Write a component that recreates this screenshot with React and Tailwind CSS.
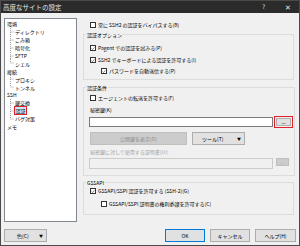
import React from 'react';

const Check = ({ checked }) => (
  <span className="w-[6px] h-[6px] border border-[#333333] bg-white flex items-center justify-center shrink-0">
    {checked && (
      <svg width="5" height="5" viewBox="0 0 5 5">
        <path d="M0.7 2.5 L1.9 3.7 L4.3 1.1" stroke="#222" strokeWidth="0.7" fill="none" />
      </svg>
    )}
  </span>
);

const Row = ({ checked, children, className = '' }) => (
  <div className={`flex items-center gap-[2px] h-[8px] ${className}`}>
    <Check checked={checked} />
    <span className="whitespace-nowrap">{children}</span>
  </div>
);

// tree connector
const Branch = ({ last }) => (
  <svg width="8" height="8" viewBox="0 0 8 8" className="shrink-0">
    <path d={last ? 'M3.5 0 V4 H7.5' : 'M3.5 0 V8 M3.5 4 H7.5'} stroke="#a0a0a0" strokeWidth="1" strokeDasharray="1 1" fill="none" />
  </svg>
);

const tree = [
  { label: '環境' },
  { label: 'ディレクトリ', child: true },
  { label: 'ごみ箱', child: true },
  { label: '暗号化', child: true },
  { label: 'SFTP', child: true },
  { label: 'シェル', child: true, last: true },
  { label: '接続' },
  { label: 'プロキシ', child: true },
  { label: 'トンネル', child: true, last: true },
  { label: 'SSH' },
  { label: '鍵交換', child: true },
  { label: '認証', child: true, selected: true },
  { label: 'バグ対策', child: true, last: true },
  { label: 'メモ' },
];

export default function App() {
  return (
    <div className="w-[300px] h-[246px] bg-[#f0f0f0] border border-[#4a4a4a] flex flex-col text-[5px] leading-[8px] text-black font-['Noto_Sans_CJK_JP','Noto_Sans',sans-serif] overflow-hidden">
      {/* title bar */}
      <div className="h-[12px] bg-[#2b2b2b] flex items-center text-[#e6e6e6] shrink-0">
        <span className="ml-[2px] text-[6.5px] leading-[12px]">高度なサイトの設定</span>
        <span className="ml-auto text-[6px]">?</span>
        <span className="ml-[20px] mr-[8px] text-[7px]">✕</span>
      </div>

      <div className="flex items-start pt-[4px]">
        {/* tree */}
        <div className="ml-[3px] mt-[1px] w-[73px] h-[204px] bg-white border border-[#828790] pt-[1px] pl-[2px]">
          {tree.map((t) => (
            <div key={t.label} className="flex items-center h-[7.9px]">
              {t.child && <Branch last={t.last} />}
              <span
                className={`whitespace-nowrap leading-[7px] ${
                  t.selected ? 'bg-[#cce4f7] outline outline-1 outline-[#e0202a] px-[0.5px]' : ''
                }`}
              >
                {t.label}
              </span>
            </div>
          ))}
        </div>

        {/* settings */}
        <div className="ml-[6px] w-[211px] flex flex-col">
          <Row className="mt-[4px] ml-[7px]">常に SSH2 の認証をバイパスする(B)</Row>

          <fieldset className="mt-[2px] border border-[#dcdcdc] pl-[6px] pr-[1px] pb-[4px]">
            <legend className="-ml-[4px] px-[1px] leading-[7px]">認証オプション</legend>
            <Row checked className="mt-[6px]">Pagent での認証を試みる(P)</Row>
            <Row checked className="mt-[4px]">SSH2 でキーボードによる認証を許可する(I)</Row>
            <Row checked className="mt-[3px] ml-[11px]">パスワードを自動送信する(P)</Row>
          </fieldset>

          <fieldset className="mt-[4px] border border-[#dcdcdc] pl-[6px] pr-[1px] pb-[6px]">
            <legend className="-ml-[4px] px-[1px] leading-[7px]">認証条件</legend>
            <Row className="mt-[3px]">エージェントの転送を許可する(F)</Row>
            <div className="mt-[4px] h-[8px]">秘密鍵(K)</div>
            <div className="mt-[2px] flex items-center">
              <div className="-ml-[1px] w-[184px] h-[10px] bg-white border border-[#7a7a7a]" />
              <div className="ml-[1px] w-[19px] h-[12px] border border-[#e0202a] p-[1px] flex">
                <div className="flex-1 bg-[#e1e1e1] border border-[#adadad] flex items-center justify-center leading-[4px] text-[5px]">...</div>
              </div>
            </div>
            <div className="mt-[4px] flex">
              <div className="w-[97px] h-[13px] bg-[#cccccc] border border-[#bfbfbf] text-[#8d8d8d] flex items-center justify-center">公開鍵を表示(D)</div>
              <div className="ml-[5px] w-[53px] h-[13px] bg-[#e1e1e1] border border-[#adadad] flex items-center pl-[9px] pr-[3px]">
                <span>ツール(T)</span>
                <span className="ml-auto text-[4px]">▼</span>
              </div>
            </div>
            <div className="mt-[3px] h-[8px] text-[#a0a0a0]">秘密鍵に対して使用する証明書(U):</div>
            <div className="mt-[2px] flex items-start">
              <div className="-ml-[1px] w-[184px] h-[11px] bg-[#f0f0f0] border border-[#cccccc]" />
              <div className="ml-[3px] w-[13px] h-[8px] bg-[#cccccc] border border-[#bfbfbf] text-[#8d8d8d] flex items-center justify-center leading-[4px] text-[4px]">...</div>
            </div>
          </fieldset>

          <fieldset className="mt-[3px] border border-[#dcdcdc] pl-[6px] pr-[1px] pb-[6px]">
            <legend className="-ml-[4px] px-[1px] leading-[7px]">GSSAPI</legend>
            <Row checked className="mt-[1px]">GSSAPI/SSPI 認証を許可する (SSH-2)(G)</Row>
            <Row className="mt-[5px] ml-[11px]">GSSAPI/SSPI 証明書の権利委譲を許可する(C)</Row>
          </fieldset>
        </div>
      </div>

      {/* buttons */}
      <div className="mt-[7px] flex items-center h-[13px] px-[3px]">
        <div className="w-[43px] h-[13px] bg-[#e1e1e1] border border-[#adadad] flex items-center pl-[12px] pr-[3px]">
          <span>色(C)</span>
          <span className="ml-auto text-[4px]">▼</span>
        </div>
        <div className="ml-auto w-[40px] h-[13px] bg-[#e1e1e1] border border-[#0078d7] flex items-center justify-center">OK</div>
        <div className="ml-[5px] w-[40px] h-[13px] bg-[#e1e1e1] border border-[#adadad] flex items-center justify-center">キャンセル</div>
        <div className="ml-[5px] w-[41px] h-[13px] bg-[#e1e1e1] border border-[#adadad] flex items-center justify-center">ヘルプ(H)</div>
      </div>
    </div>
  );
}
